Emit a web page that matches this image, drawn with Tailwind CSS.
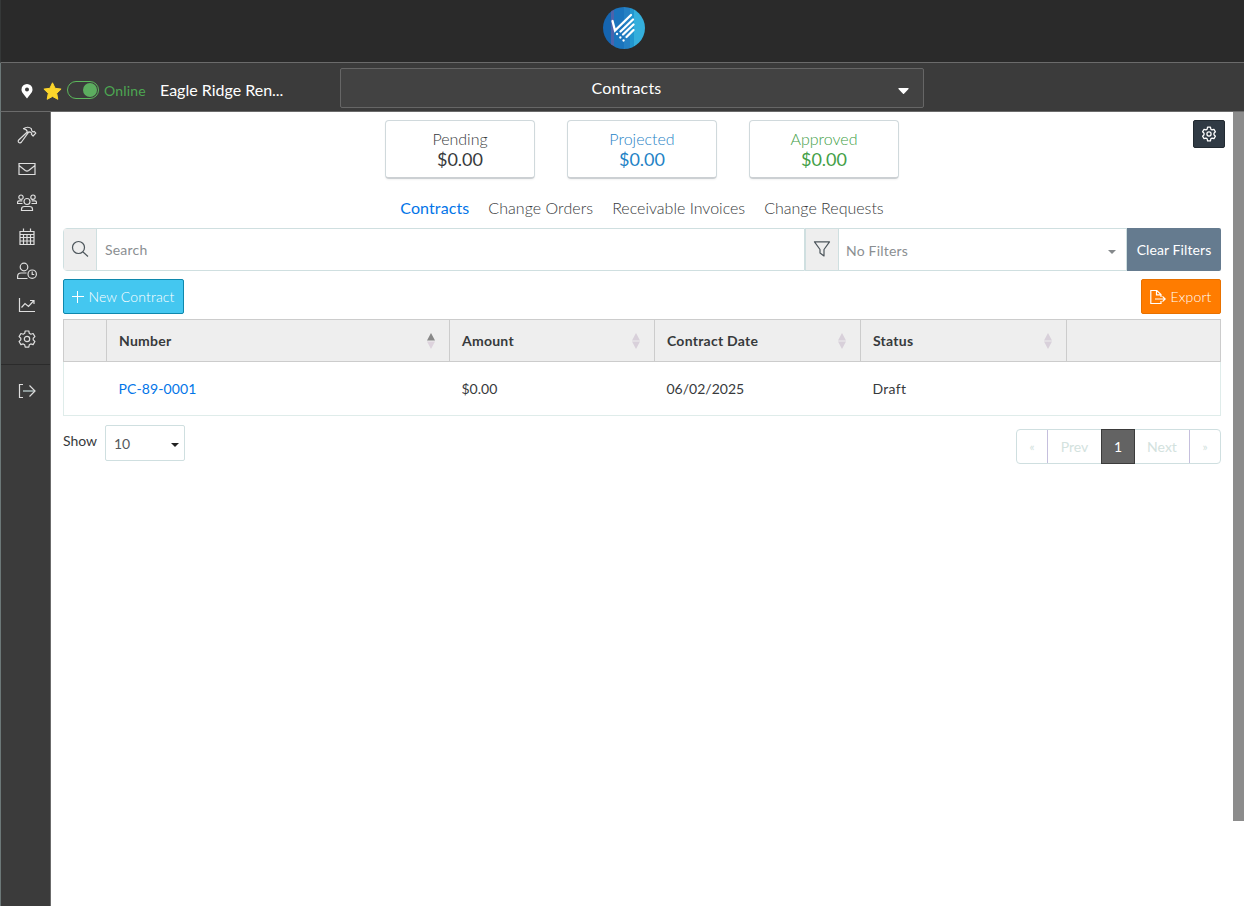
<!DOCTYPE html>
<html lang="en">

<head>
    <meta charset="utf-8">
    <meta name="viewport" content="width=device-width, initial-scale=1">
    <title>Contracts</title>
    <script src="https://cdn.jsdelivr.net/npm/@tailwindcss/browser@4"></script>
</head>

<body class="h-screen overflow-hidden flex flex-col bg-white font-['Lato',sans-serif] text-sm text-[#373a3c]">
    <!-- Top bar -->
    <header class="h-[63px] shrink-0 flex justify-center bg-[#2a2a2a] border-b border-[#6b6b6b] border-l border-l-[#353838] pl-[3px] pr-px pt-[7px]">
        <svg class="w-[42px] h-[42px]" viewBox="0 0 42 42">
            <defs>
                <clipPath id="disc"><circle cx="21" cy="21" r="21" /></clipPath>
            </defs>
            <g clip-path="url(#disc)">
                <path fill="#1565b0" d="M0 0h9v42H0z" />
                <path fill="#4c63ac" d="M8 0h3v42H8z" />
                <path fill="#1b74bd" d="M11 0h10v42H11z" />
                <path fill="#2580c4" d="M21 0h6v42h-6z" />
                <path fill="#2196cf" d="M27 0h5v42h-5z" />
                <path fill="#34afdc" d="M31 0h11v42H31z" />
            </g>
            <g fill="none" stroke="#fff" stroke-width="2.3" stroke-linecap="round">
                <path d="M9.500 14l2.500 9.500L28 8M17.500 24.500L30 12.500M20 27.500L30.500 17.500M23.500 30L30.500 23" />
                <path d="M14 27h.1M17.300 30.500h.1M20.500 33.500h.1" />
            </g>
        </svg>
    </header>

    <!-- Project bar -->
    <div class="h-[49px] shrink-0 flex bg-[#3b3b3b] border-b border-[#6b6b6b] border-l border-l-[#6c7878]">
        <div class="w-[339px] flex items-center pl-5 pt-[7px]">
            <svg class="w-3 h-4" viewBox="0 0 12 16" fill="#fff">
                <path fill-rule="evenodd" d="M6 1a5.500 5.500 0 0 0-5.500 5.500C.5 9 2 10.500 6 15.500c4-5 5.500-6.500 5.500-9A5.500 5.500 0 0 0 6 1zm0 3.500a2 2 0 1 1 0 4 2 2 0 0 1 0-4z" />
            </svg>
            <svg class="ml-[10px] w-[19px] h-[18px]" viewBox="0 0 19 18" fill="#fbd52b">
                <path d="M9.500.8l2.600 5.500 6 .8-4.400 4.200 1.100 6-5.300-2.900-5.300 2.900 1.100-6L.9 7.100l6-.8z" stroke="#fbd52b" stroke-linejoin="round" />
            </svg>
            <div class="ml-[5px] -mt-0.5 w-[32px] h-[18px] rounded-full border border-[#5cb85c] flex items-center justify-end pr-px">
                <span class="size-[14px] rounded-full bg-[#5cad5f]"></span>
            </div>
            <span class="ml-[5px] w-[43px] text-sm tracking-[0.2px] text-[#4da652]">Online</span>
            <span class="ml-[13px] -mt-0.5 text-base text-white whitespace-nowrap">Eagle Ridge Ren...</span>
        </div>
        <div class="mt-[5px] w-[584px] h-10 flex items-center bg-[#424242] border border-[#666] rounded-xs pr-[14px]">
            <span class="flex-1 pl-[14px] text-base tracking-[0.2px] text-white text-center">Contracts</span>
            <svg class="mt-1.5 w-[11px] h-[6px]" viewBox="0 0 11 6" fill="#fff"><path d="M1 0h9q1 .3.500 1L6 5.700q-.5.500-1 0L.5 1Q0 .3 1 0z" /></svg>
        </div>
    </div>

    <div class="flex flex-1 min-h-0">
        <!-- Sidebar -->
        <nav class="w-[51px] shrink-0 bg-[#3b3b3b] border-l border-l-[#6c7878] border-r border-r-[#6b6b6b]">
            <div class="flex flex-col items-center gap-[14px] pt-[13px] pl-[3px] pb-[15px] [&>svg]:size-5 [&>svg]:fill-none [&>svg]:stroke-[#dedede] [&>svg]:stroke-[1.2]">
                <svg viewBox="0 0 20 20"><path d="M6.500 3.700C9 1.700 12.500 1.800 14.300 3.700l.5 2.200 1.400 1.100 1-.6 1.600 1.700-2.700 2.900-1.700-1.700.3-1-1.300-1.200-1.600-.3L4.500 17c-.9 1-2 1.200-2.800.4-.8-.8-.6-1.900.3-2.700L10.300 7C10 5.200 8.800 4 6.500 3.700zM10.300 7l1.500.3" stroke-linejoin="round" /></svg>
                <svg viewBox="0 0 20 20"><path d="M2 4.500h16v11H2zM2 6.500l6.300 5q1.700 1.200 3.400 0l6.300-5" /></svg>
                <svg viewBox="0 0 20 20"><circle cx="10" cy="8.500" r="3" /><circle cx="4" cy="4.200" r="2.200" /><circle cx="16" cy="4.200" r="2.200" /><path d="M4.500 17.500v-1.300c0-1.700 1.300-2.700 3-2.700h5c1.700 0 3 1 3 2.700v1.300zM5.500 10.500H.5v-1c0-1 .8-1.700 1.800-1.700h3M14.500 10.500h5v-1c0-1-.8-1.700-1.800-1.700h-3" /></svg>
                <svg viewBox="0 0 20 20"><path d="M3 4.500h14v13H3zM3 7.500h14M3 10.500h14M3 14h14M6.500 1.500v3M13.500 1.500v3M6.500 7.500v10M10 7.500v10M13.500 7.500v10" /></svg>
                <svg viewBox="0 0 20 20"><circle cx="7" cy="6" r="3.800" /><path d="M10.500 17.500H.6v-2c0-2 1.400-3.500 3.400-3.500h5.500" /><circle cx="15.200" cy="13.200" r="4.200" /><path d="M15.200 10.500v3h2" /></svg>
                <svg viewBox="0 0 20 20"><path d="M2.500 3v13.500H18M4.500 12.500L8 8.500l3.500 3 5-5.500M13 5.500h4v3.500" /></svg>
                <svg viewBox="0 0 20 20"><path d="M8.200 2h3.600l.5 2.300 1.500.9 2.300-.7 1.800 3.100-1.700 1.600v1.700l1.700 1.600-1.800 3.100-2.300-.7-1.500.9-.5 2.300H8.200l-.5-2.300-1.500-.9-2.300.7-1.800-3.100 1.700-1.600V9.200L2.100 7.600l1.800-3.100 2.300.7 1.500-.9z" stroke-linejoin="round" /><circle cx="10" cy="10" r="2.700" /></svg>
            </div>
            <div class="flex justify-center border-t border-[#2b2b2b] pt-4 pl-[3px]">
                <svg class="size-5 fill-none stroke-[#dedede] stroke-[1.200]" viewBox="0 0 20 20"><path d="M6 10h11.500" stroke="#8d9a9a" stroke-width="2" /><path d="M6 3.500H2.500v13H6M12.500 4.500L18 10l-5.500 5.500" /></svg>
            </div>
        </nav>

        <!-- Content -->
        <main class="relative flex-1 pt-2 pl-3 pr-3">
            <button class="absolute right-2 top-2 w-8 h-7 flex items-center justify-center bg-[#303a44] border border-[#222a31] rounded-xs">
                <svg class="size-4 fill-none stroke-white stroke-[1.600]" viewBox="0 0 20 20"><path d="M8.200 1.500h3.600l.5 2.500 1.500.9 2.400-.8 1.800 3.200-1.800 1.700v2l1.800 1.700-1.800 3.200-2.400-.8-1.500.9-.5 2.500H8.200L7.700 16l-1.500-.9-2.400.8L2 12.700 3.800 11V9L2 7.300l1.800-3.200 2.400.8L7.700 4z" stroke-linejoin="round" /><circle cx="10" cy="10" r="2.600" /></svg>
            </button>

            <div class="flex justify-center gap-8 text-base leading-5 font-light text-center">
                <div class="w-[150px] h-[59px] pt-2 rounded border border-[#d0d9dc] border-b-2 border-b-[#ccd0d3] shadow-xs">
                    <div>Pending</div>
                    <div class="text-lg leading-5 font-normal">$0.00</div>
                </div>
                <div class="w-[150px] h-[59px] pt-2 rounded border border-[#d0d9dc] border-b-2 border-b-[#ccd0d3] shadow-xs text-[#1f83c6]">
                    <div>Projected</div>
                    <div class="text-lg leading-5 font-normal">$0.00</div>
                </div>
                <div class="w-[150px] h-[59px] pt-2 rounded border border-[#d0d9dc] border-b-2 border-b-[#ccd0d3] shadow-xs text-[#43a047]">
                    <div>Approved</div>
                    <div class="text-lg leading-5 font-normal">$0.00</div>
                </div>
            </div>

            <div class="mt-[17px] h-8 flex justify-center items-start gap-[19px] text-base font-light">
                <a class="text-[#0275e8] font-normal tracking-[0.1px]">Contracts</a>
                <a class="tracking-[0.05px]">Change Orders</a>
                <a>Receivable Invoices</a>
                <a>Change Requests</a>
            </div>

            <!-- Search and filters -->
            <div class="flex h-[43px]">
                <div class="w-[742px] flex border border-[#cfdfe0] rounded-l">
                    <div class="w-[33px] flex items-center justify-center bg-[#eee] border-r border-[#cfdfe0]">
                        <svg class="size-[18px] -mt-0.5 fill-none stroke-[#4c555b] stroke-[1.200]" viewBox="0 0 18 18"><circle cx="7.500" cy="7.500" r="6" /><path d="M12 12l5 4.500" /></svg>
                    </div>
                    <span class="pl-2 self-center tracking-[0.2px] text-[#8b8f92]">Search</span>
                </div>
                <div class="w-[322px] flex items-center border-y border-r border-[#cfdfe0]">
                    <div class="w-[34px] h-full flex items-center justify-center bg-[#eee] border-x border-[#cfdfe0]">
                        <svg class="size-[18px] -mt-0.5 fill-none stroke-[#4c555b] stroke-[1.200]" viewBox="0 0 18 18"><path d="M1.500 1.800h15L11 9.500V16l-4-3V9.500z" stroke-linejoin="round" /></svg>
                    </div>
                    <span class="flex-1 pl-[7px] pt-0.5 tracking-[0.2px] text-[#8b8f92]">No Filters</span>
                    <svg class="mr-[10px] mt-1 w-2 h-1" viewBox="0 0 8 4" fill="#85898c"><path d="M0 0h8L4 4z" /></svg>
                </div>
                <button class="w-[94px] bg-[#657b8f] text-white rounded-r-xs whitespace-nowrap tracking-[0.1px]">Clear Filters</button>
            </div>

            <div class="mt-2 flex justify-between font-light text-white">
                <button class="w-[121px] h-[35px] flex items-center justify-center gap-1 bg-[#44c7f0] border border-[#0e88ad] rounded-xs whitespace-nowrap tracking-[0.15px]">
                    <svg class="size-3" viewBox="0 0 12 12" fill="none" stroke="#fff"><path d="M5.500 0v12M0 5.500h12" /></svg>
                    New Contract
                </button>
                <button class="w-20 h-[35px] flex items-center justify-center gap-[4px] bg-[#ff7c00] border border-[#e87100] rounded-xs tracking-[0.2px]">
                    <svg class="size-4" viewBox="0 0 16 16" fill="none" stroke="#fff" stroke-width="1.200"><path d="M11 12v2.500H.8v-13h6L11 5.500V8M6.500 1.500v4.300H11M5 10h10M12.500 7.300l2.700 2.700-2.700 2.700" /></svg>
                    Export
                </button>
            </div>

            <!-- Contracts table -->
            <table class="mt-[5px] w-[1158px] table-fixed border-collapse text-left">
                <colgroup>
                    <col class="w-[43px]">
                    <col class="w-[343px]">
                    <col class="w-[205px]">
                    <col class="w-[206px]">
                    <col class="w-[206px]">
                    <col>
                </colgroup>
                <thead>
                    <tr class="h-[42px] bg-[#eee] tracking-[0.25px] [&>th]:border [&>th]:border-[#ccc] [&>th]:px-3">
                        <th></th>
                        <th>
                            <div class="flex items-center justify-between">Number
                                <svg class="mr-0.5 w-2 h-4" viewBox="0 0 8 16"><path fill="#888" d="M4 0l4 7.500H0z" /><path fill="#ddd3dd" d="M4 16l4-7.500H0z" /></svg>
                            </div>
                        </th>
                        <th>
                            <div class="flex items-center justify-between">Amount
                                <svg class="mr-0.5 w-2 h-4" viewBox="0 0 8 16" fill="#d8d0da"><path d="M4 0l4 7.500H0zM4 16l4-7.500H0z" /></svg>
                            </div>
                        </th>
                        <th>
                            <div class="flex items-center justify-between">Contract Date
                                <svg class="mr-0.5 w-2 h-4" viewBox="0 0 8 16" fill="#d8d0da"><path d="M4 0l4 7.500H0zM4 16l4-7.500H0z" /></svg>
                            </div>
                        </th>
                        <th>
                            <div class="flex items-center justify-between">Status
                                <svg class="mr-0.5 w-2 h-4" viewBox="0 0 8 16" fill="#d8d0da"><path d="M4 0l4 7.500H0zM4 16l4-7.500H0z" /></svg>
                            </div>
                        </th>
                        <th></th>
                    </tr>
                </thead>
                <tbody>
                    <tr class="h-[54px] border border-[#dfecea] [&>td]:px-3">
                        <td></td>
                        <td><a class="tracking-[0.1px] text-[#0275e8]">PC-89-0001</a></td>
                        <td>$0.00</td>
                        <td>06/02/2025</td>
                        <td class="tracking-[0.3px]">Draft</td>
                        <td></td>
                    </tr>
                </tbody>
            </table>

            <!-- Footer of the table -->
            <div class="mt-[9px] flex items-start justify-between">
                <div class="flex items-start">
                    <span class="pt-[6px] w-[42px]">Show</span>
                    <div class="w-20 h-9 flex items-center justify-between border border-[#cfdfe0] rounded-xs px-2 pr-[5px] text-[#55595c]">
                        <span class="pt-0.5">10</span>
                        <svg class="mt-[3px] w-2 h-1" viewBox="0 0 8 4" fill="#222"><path d="M0 0h8L4 4z" /></svg>
                    </div>
                </div>
                <div class="mt-1 w-[205px] h-[35px] flex border border-[#cfdfe0] rounded text-[#d3e2de] [&>span]:flex [&>span]:items-center [&>span]:justify-center">
                    <span class="w-[31px] text-xs border-r border-[#c5bfdd]">«</span>
                    <span class="w-[53px]">Prev</span>
                    <span class="w-[34px] -my-px bg-[#636363] border border-[#3b3b3b] text-white">1</span>
                    <span class="w-[54px]">Next</span>
                    <span class="w-[31px] text-xs border-l border-[#c5bfdd]">»</span>
                </div>
            </div>
        </main>

        <!-- Scrollbar -->
        <div class="w-[11px] h-[709px] bg-[#8c8c8c]"></div>
    </div>
</body>

</html>
